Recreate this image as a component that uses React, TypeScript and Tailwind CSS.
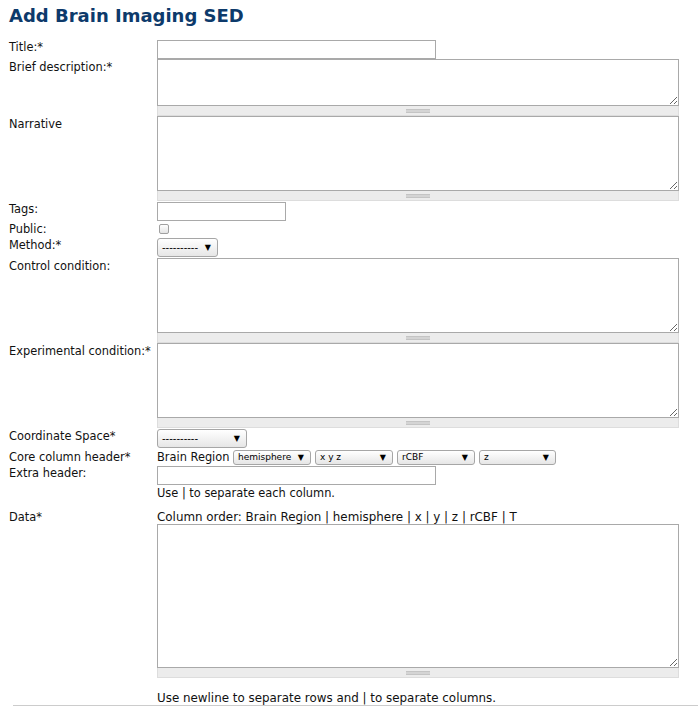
import React from 'react';

const font = { fontFamily: '"DejaVu Sans", Verdana, sans-serif' };

function Grip() {
  return (
    <div className="h-[10px] w-[522px] bg-[#ececec] border border-t-0 border-[#dddddd] flex items-center justify-center">
      <div className="w-[24px] h-[4px] bg-[#d4d4d4] border-y border-[#c4c4c4]" />
    </div>
  );
}

function Area({ h }: { h: string }) {
  return (
    <div className="flex flex-col">
      <textarea className={`w-[522px] ${h} border border-[#a9a9a9] bg-white block resize outline-none`} />
      <Grip />
    </div>
  );
}

function FakeSelect({ w, text, small }: { w: string; text: string; small?: boolean }) {
  return (
    <div
      className={`${w} ${small ? 'h-[15px] text-[9px]' : 'h-[19px] text-[10px]'} flex items-center justify-between pl-[4px] pr-[6px] border border-[#a6a6a6] rounded-[3px] bg-gradient-to-b from-white to-[#e6e6e6] text-black`}
    >
      <span className="leading-none">{text}</span>
      <span className="text-[8px] leading-none">▼</span>
    </div>
  );
}

function Row({ label, children, top, className }: { label: string; children?: React.ReactNode; top?: string; className?: string }) {
  return (
    <div className={`flex ${className ?? ''}`}>
      <div className={`w-[148px] shrink-0 leading-[14px] text-[11.4px] whitespace-nowrap ${top ?? ''}`}>{label}</div>
      <div>{children}</div>
    </div>
  );
}

export default function App() {
  return (
    <div className="bg-white min-h-[706px] w-[698px] overflow-hidden text-[11.9px] text-[#111]" style={font}>
      <div className="pl-[9px]">
        <h1 className="pt-[5px] text-[18px] leading-[22px] font-bold text-[#0d3a6b]">Add Brain Imaging SED</h1>

        <div className="mt-[13px]">
          <Row label="Title:*">
            <input className="w-[279px] h-[19px] border border-[#a9a9a9] block outline-none" />
          </Row>
          <Row label="Brief description:*" top="pt-[1px]">
            <Area h="h-[47px]" />
          </Row>
          <Row label="Narrative" top="pt-[1px]">
            <Area h="h-[75px]" />
          </Row>
          <Row label="Tags:" className="mt-[1px]">
            <input className="w-[129px] h-[19px] border border-[#a9a9a9] block outline-none" />
          </Row>
          <Row label="Public:" className="mt-[1px] h-[16px]">
            <div className="w-[10px] h-[10px] mt-[2px] ml-[2px] border border-[#a0a0a0] rounded-[2px] bg-gradient-to-b from-white to-[#e4e4e4]" />
          </Row>
          <Row label="Method:*">
            <FakeSelect w="w-[61px]" text="----------" />
          </Row>
          <Row label="Control condition:" top="pt-[1px]" className="mt-[1px]">
            <Area h="h-[75px]" />
          </Row>
          <Row label="Experimental condition:*" top="pt-[1px]">
            <Area h="h-[75px]" />
          </Row>
          <Row label="Coordinate Space*" className="mt-[1px]">
            <FakeSelect w="w-[90px]" text="----------" />
          </Row>
          <Row label="Core column header*" className="mt-[2px]">
            <div className="flex items-center gap-[4px] h-[15px]">
              <span className="w-[72px] whitespace-nowrap text-[11.4px]">Brain Region</span>
              <FakeSelect w="w-[78px]" text="hemisphere" small />
              <FakeSelect w="w-[78px]" text="x y z" small />
              <FakeSelect w="w-[78px]" text="rCBF" small />
              <FakeSelect w="w-[77px]" text="z" small />
            </div>
          </Row>
          <Row label="Extra header:" className="mt-[1px]">
            <input className="w-[279px] h-[19px] border border-[#a9a9a9] block outline-none" />
            <div className="mt-[1px] leading-[14px] text-[11.4px]">Use | to separate each column.</div>
          </Row>
          <Row label="Data*" className="mt-[10px]">
            <div className="leading-[14px]">Column order: Brain Region | hemisphere | x | y | z | rCBF | T</div>
            <Area h="h-[144px]" />
            <div className="mt-[13px] leading-[14px]">Use newline to separate rows and | to separate columns.</div>
          </Row>
        </div>
      </div>
      <div className="ml-[13px] border-t border-[#cccccc]" />
    </div>
  );
}
